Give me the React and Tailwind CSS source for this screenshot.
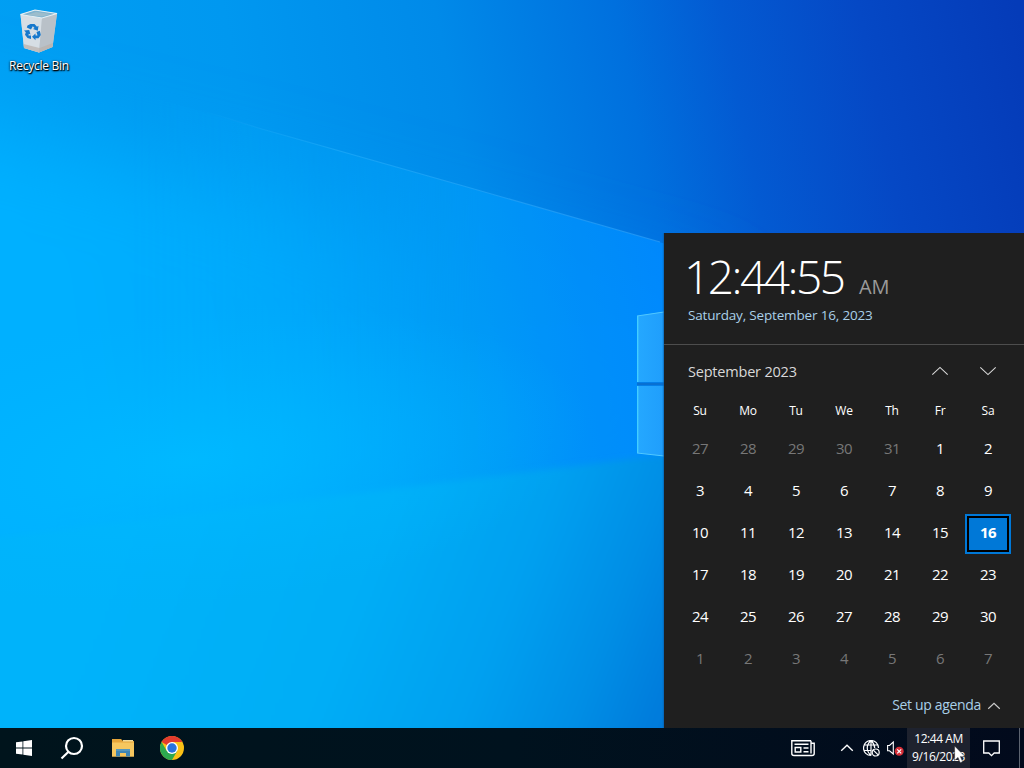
import React from "react";

const weekDays = ["Su", "Mo", "Tu", "We", "Th", "Fr", "Sa"];

// 5 days of August, 30 of September, 7 of October
const days = [
  ...[27, 28, 29, 30, 31].map((n) => ({ n, other: true })),
  ...Array.from({ length: 30 }, (_, i) => ({ n: i + 1, other: false })),
  ...[1, 2, 3, 4, 5, 6, 7].map((n) => ({ n, other: true })),
];

function Wallpaper() {
  return (
    <svg
      className="absolute inset-0 h-full w-full"
      viewBox="0 0 1024 768"
      preserveAspectRatio="none"
    >
      <defs>
        <linearGradient id="sky" gradientUnits="userSpaceOnUse" x1="0" y1="220" x2="1020" y2="20">
          <stop offset="0" stopColor="#00a0f4" />
          <stop offset="0.25" stopColor="#0098f0" />
          <stop offset="0.45" stopColor="#008ae9" />
          <stop offset="0.62" stopColor="#0070de" />
          <stop offset="0.72" stopColor="#035ad2" />
          <stop offset="0.85" stopColor="#0548c5" />
          <stop offset="1" stopColor="#053bb8" />
        </linearGradient>
        <linearGradient id="beam" gradientUnits="userSpaceOnUse" x1="60" y1="400" x2="680" y2="320">
          <stop offset="0" stopColor="#00b0ff" />
          <stop offset="0.35" stopColor="#00aafc" />
          <stop offset="0.65" stopColor="#009bf6" />
          <stop offset="0.85" stopColor="#008ff9" />
          <stop offset="1" stopColor="#008aff" />
        </linearGradient>
        {/* the beam has a sharp edge only near the window */}
        <linearGradient id="fade" gradientUnits="userSpaceOnUse" x1="130" y1="0" x2="480" y2="0">
          <stop offset="0" stopColor="#fff" stopOpacity="0" />
          <stop offset="0.6" stopColor="#fff" stopOpacity="0.35" />
          <stop offset="1" stopColor="#fff" stopOpacity="0.9" />
        </linearGradient>
        <linearGradient id="floor" gradientUnits="userSpaceOnUse" x1="130" y1="500" x2="690" y2="720">
          <stop offset="0" stopColor="#00b3fa" />
          <stop offset="0.4" stopColor="#00aef6" />
          <stop offset="0.65" stopColor="#00a0f0" />
          <stop offset="0.82" stopColor="#008ee5" />
          <stop offset="1" stopColor="#0074d8" />
        </linearGradient>
        <radialGradient id="glow" gradientUnits="userSpaceOnUse" cx="0" cy="0" r="1" gradientTransform="translate(190 460) rotate(-6) scale(400 150)">
          <stop offset="0" stopColor="#00baff" stopOpacity="0.9" />
          <stop offset="1" stopColor="#00b4ff" stopOpacity="0" />
        </radialGradient>
        <linearGradient id="ray" gradientUnits="userSpaceOnUse" x1="200" y1="0" x2="660" y2="0">
          <stop offset="0" stopColor="#35b8ff" stopOpacity="0" />
          <stop offset="0.3" stopColor="#35b8ff" stopOpacity="0.4" />
          <stop offset="1" stopColor="#35a8ff" stopOpacity="0.6" />
        </linearGradient>
        <linearGradient id="pane" x1="0" y1="0" x2="1" y2="0">
          <stop offset="0" stopColor="#25a8ff" />
          <stop offset="1" stopColor="#1c98fa" />
        </linearGradient>
        <mask id="beamMask">
          <rect width="1024" height="768" fill="url(#fade)" />
        </mask>
        <filter id="soft" x="-20%" y="-20%" width="140%" height="140%">
          <feGaussianBlur stdDeviation="45" />
        </filter>
        <filter id="soft2" x="-20%" y="-20%" width="140%" height="140%">
          <feGaussianBlur stdDeviation="3" />
        </filter>
      </defs>
      <rect width="1024" height="768" fill="url(#sky)" />
      <path d="M-160 90L262 190L720 310V500L-160 640Z" fill="url(#beam)" filter="url(#soft)" />
      <path d="M-60 36L262 129L680 248V490L-60 570Z" fill="url(#beam)" mask="url(#beamMask)" />
      <path d="M-60 545L640 458L720 450V800H-60Z" fill="url(#floor)" filter="url(#soft2)" />
      <rect width="664" height="768" fill="url(#glow)" />
      <path d="M200 110L262 129L460 185L660 242" fill="none" stroke="url(#ray)" strokeWidth="1.2" />
      <path d="M637 316L680 309V382H637Z" fill="url(#pane)" />
      <path d="M637 386H680V458L637 453Z" fill="url(#pane)" />
      <path d="M637.7 316V382M637.7 386V453" stroke="#45d0ff" strokeWidth="1.3" />
      <path d="M637 316L664 312M637 453L664 456" stroke="#50c8ff" strokeWidth="1" />
      <path d="M637 384H664" stroke="#0870d2" strokeWidth="3" />
      <path d="M663.5 233V728" stroke="#0a5fa8" strokeWidth="1.5" opacity="0.6" />
    </svg>
  );
}

function RecycleBin() {
  return (
    <div className="absolute left-0 top-2 flex w-[78px] flex-col items-center">
      <svg width="40" height="46" viewBox="0 0 40 46">
        <path d="M1.5 6.5L16 2L38 5.5L33.5 39L20 44.5L5 40Z" fill="#c9d2d9" />
        <path d="M1.5 6.5L23 10L20 44.5L5 40Z" fill="#d6dee4" />
        <path d="M23 10L38 5.5L33.5 39L20 44.5Z" fill="#b9c1c8" />
        <path d="M1.5 6.5L16 2L38 5.5L23 10Z" fill="#7fb3cf" stroke="#e5f0f5" strokeWidth="1.2" />
        <path d="M8 7L17 4L32 6L23 8.5Z" fill="#9dbdcc" />
        <path d="M4.5 36L20.5 40L34 35L33.5 39L20 44.5L5 40Z" fill="#b9b1ab" opacity="0.7" />
        <g fill="#1678cc">
          <path d="M8.5 17.5L11.5 16H15.5L18 18.8L19.5 17.8L18.8 22.8L14 21L15.5 20L13.8 18.2L12 21.5L7.8 19.5Z" />
          <path d="M17.5 24L20.8 22.8L21.8 27L19.5 30.2H16.5V32.3L13 28.8L16.5 25.5V27.5H18.5Z" />
          <path d="M5 22.5L10.2 22L11.5 26.5L9.8 25.8L9.5 27.5H12V31L8.5 30L6 26.8L6.8 24.2Z" />
        </g>
      </svg>
      <span className="mt-[4px] whitespace-nowrap text-[12px] leading-4 tracking-[-0.25px] text-white [text-shadow:0_1px_2px_#000,1px_1px_1px_#000,0_0_2px_#0008]">
        Recycle Bin
      </span>
    </div>
  );
}

function Chevron({ down, size = 16, stroke = 1.1 }) {
  return (
    <svg
      width={size}
      height={size / 2}
      viewBox="0 0 16 8"
      fill="none"
      stroke="currentColor"
      strokeWidth={stroke}
      overflow="visible"
    >
      <path d={down ? "M0.3 0.3L8 7.6L15.7 0.3" : "M0.3 7.7L8 0.4L15.7 7.7"} />
    </svg>
  );
}

function CalendarFlyout() {
  return (
    <section className="absolute bottom-0 right-0 flex h-[495px] w-[360px] flex-col bg-[#1f1f1f]">
      <div className="h-[112px] border-b border-[#4d4d4d] pl-[24px] pt-[14px]">
        <div className="flex items-baseline whitespace-nowrap">
          <span className="-ml-[4px] w-[175px] text-[46px] font-light leading-[58px] tracking-[-2.5px] text-white">
            12:44:55
          </span>
          <span className="text-[20px] leading-6 tracking-[-0.1px] text-[#9a9a9a]">AM</span>
        </div>
        <p className="text-[13.5px] leading-5 tracking-[-0.17px] text-[#a9cfe8]">
          Saturday, September 16, 2023
        </p>
      </div>
      <div className="flex h-[52px] items-center pl-[24px] pr-[12px] text-[#d8d8d8]">
        <h2 className="flex-1 pt-[2px] text-[14.5px] tracking-[-0.2px]">September 2023</h2>
        <button className="flex w-12 justify-center">
          <Chevron />
        </button>
        <button className="flex w-12 justify-center">
          <Chevron down />
        </button>
      </div>
      <div className="grid h-[31px] grid-cols-7 items-center px-[12px] pb-[3px] text-center text-[12px] leading-4 tracking-[-0.2px] text-white">
        {weekDays.map((d) => (
          <span key={d}>{d}</span>
        ))}
      </div>
      <div className="grid grid-cols-7 px-[12px] text-[15px] tracking-[-0.6px]">
        {days.map((d, i) => {
          const today = d.n === 16;
          return (
            <div key={i} className="flex h-[42px] items-center justify-center">
              {today ? (
                <div className="mt-[2px] h-10 w-[46px] border-2 border-[#0078d7] bg-black p-[2px]">
                  <div className="flex h-full items-center justify-center bg-[#0078d7] pb-[4px] font-bold text-white">
                    {d.n}
                  </div>
                </div>
              ) : (
                <span className={d.other ? "pb-[2px] text-[#777777]" : "pb-[2px] text-white"}>{d.n}</span>
              )}
            </div>
          );
        })}
      </div>
      <div className="flex flex-1 items-center justify-end gap-[7px] pr-[24px] text-[#a9cfe8]">
        <span className="text-[14px] tracking-[-0.33px]">Set up agenda</span>
        <span className="pt-[3px] text-[#cccccc]">
          <Chevron size={12} stroke={1.5} />
        </span>
      </div>
    </section>
  );
}

function Taskbar() {
  return (
    <footer className="relative flex h-10 items-center bg-linear-to-r from-[#00141c] via-[#00121e] to-[#020a1c] text-white">
      <button className="flex h-full w-12 items-center justify-center">
        <svg width="16" height="16" viewBox="0 0 16 16" fill="#fff">
          <path d="M0 2.3L6.5 1.4V7.6H0ZM7.3 1.3L16 0V7.6H7.3ZM0 8.4H6.5V14.6L0 13.7ZM7.3 8.4H16V16L7.3 14.7Z" />
        </svg>
      </button>
      <button className="flex h-full w-12 items-center justify-center">
        <svg width="24" height="24" viewBox="0 0 24 24" fill="none" stroke="#fff" strokeWidth="2.2">
          <circle cx="14" cy="10" r="8" />
          <path d="M8.5 15.8L1.5 22.5" />
        </svg>
      </button>
      <button className="flex h-full w-[52px] items-center justify-center pl-[2px]">
        <svg width="22" height="20" viewBox="0 0 22 20">
          <path d="M0 1H9L11 3H22V18.5H0Z" fill="#e5a53a" />
          <path d="M0 4.5H22V18.5H0Z" fill="#f6c75f" />
          <path d="M11 2H21V3.5H11Z" fill="#f3dc98" />
          <path d="M4 11H18V18.5H14V15H8V18.5H4Z" fill="#3e86b5" />
          <path d="M4 11H18V13H4Z" fill="#5597bd" />
        </svg>
      </button>
      <button className="flex h-full w-12 items-center justify-center">
        <svg width="24" height="24" viewBox="0 0 24 24">
          <circle cx="12" cy="12" r="12" fill="#fbc116" />
          <path d="M12 12L1.6 6A12 12 0 0 1 22.4 6H12Z" fill="#e33b2e" />
          <path d="M1.6 6A12 12 0 0 0 12 24L17.2 15L12 12L6.8 15Z" fill="#2da94f" />
          <circle cx="12" cy="12" r="6" fill="#fff" />
          <circle cx="12" cy="12" r="4.7" fill="#2873df" />
        </svg>
      </button>
      <div className="flex-1" />
      <svg className="mr-[26px]" width="24" height="17" viewBox="0 0 24 17" fill="none" stroke="#fff" strokeWidth="1.4">
        <path d="M20 .8H.8V13.5Q.8 15.5 3 15.5H21Q23.2 15.5 23.2 13.5V3.2H20M20 .8V13.5" />
        <path d="M3.5 4.2H17.5M12.5 8H17.5M12.5 11.8H17.5" />
        <path d="M4.2 7.5H9.8V12H4.2Z" />
      </svg>
      <Chevron size={12} stroke={1.8} />
      <svg className="ml-[10px]" width="17" height="17" viewBox="0 0 17 17" fill="none" stroke="#fff" strokeWidth="1.2">
        <path d="M8 15.5A7.5 7.5 0 1 1 15.5 8M8 .5V15.5M8 .5C3 5 3 11 8 15.5M8 .5C10.8 3 11.6 5.5 11.7 8M1.3 5H14.7M.8 10.5H8.5" />
        <circle cx="12.7" cy="12.5" r="3.5" />
        <path d="M10.3 10.1L15.1 14.9" />
      </svg>
      <svg className="ml-[7px] mr-[3px]" width="17" height="17" viewBox="0 0 17 17" fill="none">
        <path d="M.6 5.5H2.5L6.3 2V14L2.5 10.8H.6Z" stroke="#fff" strokeWidth="1.1" />
        <circle cx="12.2" cy="11.3" r="4.5" fill="#d52d36" />
        <path d="M10.2 9.3L14.2 13.3M14.2 9.3L10.2 13.3" stroke="#fff" strokeWidth="1.2" />
      </svg>
      <div className="flex h-full w-[63px] flex-col items-center bg-[#1e222e] pt-[2px] text-[12px] leading-[18px] tracking-[-0.45px] whitespace-nowrap">
        <span>12:44 AM</span>
        <span>9/16/2023</span>
      </div>
      <button className="flex h-full w-[41px] items-center justify-center pl-[2px]">
        <svg width="17" height="17" viewBox="0 0 17 17" fill="none" stroke="#fff" strokeWidth="1.3">
          <path d="M.7 1H16.3V13H11.2L8.5 15.7L5.8 13H.7Z" />
        </svg>
      </button>
      <div className="h-full w-[13px] pl-[8px]">
        <div className="h-full w-px bg-[#5d6470]" />
      </div>
      {/* mouse pointer */}
      <svg className="absolute left-[954px] top-[17px]" width="12" height="19" viewBox="0 0 12 19">
        <path d="M.6 1V15.5L4 12.4L6.2 17.7L8.7 16.7L6.4 11.5H11Z" fill="#fff" stroke="#222" strokeWidth="0.5" />
      </svg>
    </footer>
  );
}

export default function App() {
  return (
    <div className="relative flex h-screen w-full flex-col overflow-hidden bg-[#0078d7] font-['Open_Sans','Noto_Sans',sans-serif]">
      <main className="relative flex-1 overflow-hidden">
        <div className="absolute inset-x-0 top-0 h-[768px]">
          <Wallpaper />
        </div>
        <RecycleBin />
        <CalendarFlyout />
      </main>
      <Taskbar />
    </div>
  );
}
